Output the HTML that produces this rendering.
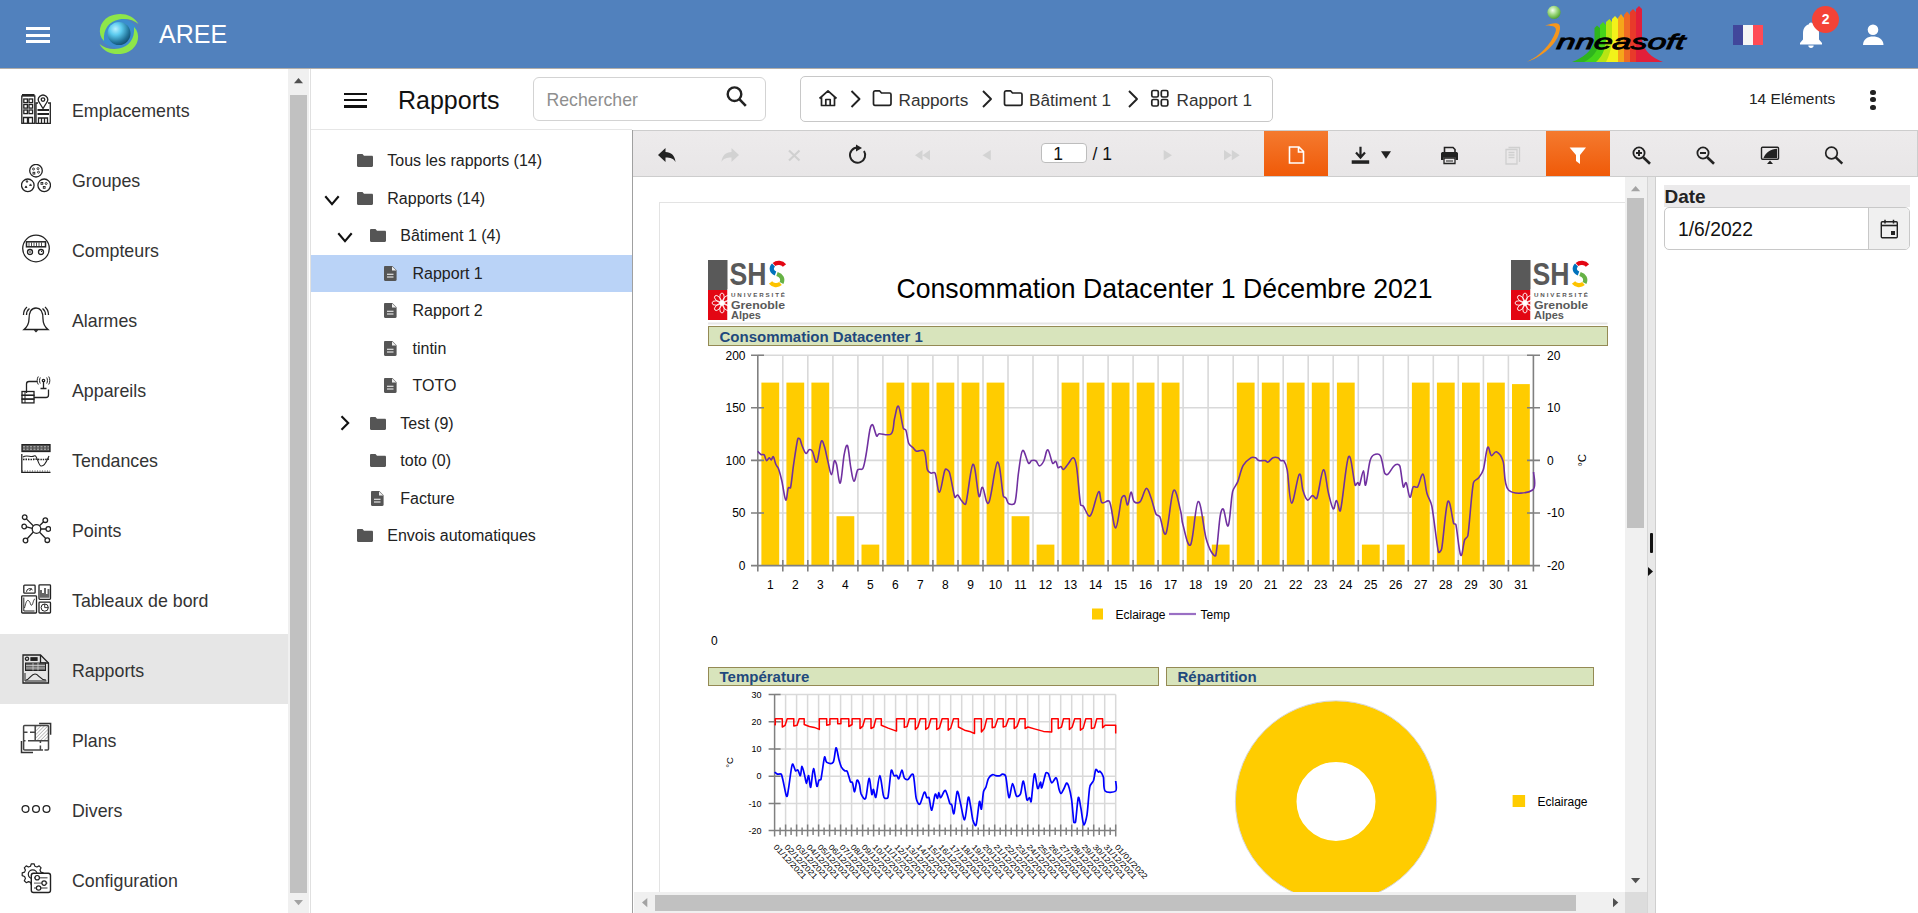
<!DOCTYPE html>
<html><head><meta charset="utf-8">
<style>
*{box-sizing:border-box;margin:0;padding:0}
html,body{width:1918px;height:913px;overflow:hidden;background:#fff;font-family:"Liberation Sans",sans-serif;color:#222}
.abs{position:absolute}
#hdr{position:absolute;left:0;top:0;width:1918px;height:68px;background:#5181bd}
#side{position:absolute;left:0;top:68px;width:288px;height:845px;background:#fff}
.si{position:absolute;left:0;width:288px;height:70px}
.si .tx{position:absolute;left:72px;top:1.5px;line-height:70px;font-size:17.8px;color:#333}
.si svg{position:absolute;left:20px;top:19px}
.si.sel{background:#e6e6e6}
#sscroll{position:absolute;left:288px;top:68px;width:21px;height:845px;background:#f0f0f0}
#mainhdr{position:absolute;left:310px;top:68px;width:1608px;height:62px;background:#fff}
#tree{position:absolute;left:310px;top:129px;width:322px;height:784px;background:#fff;border-top:1px solid #e6e6e6}
.ti{position:absolute;left:1px;width:321px;height:37px;font-size:16px;line-height:37px;color:#222}
.ti.sel{background:#bad3f7}
#viewer{position:absolute;left:632px;top:130px;width:1286px;height:783px;background:#fff;border-left:1px solid #a0a0a0}
#tb{position:absolute;left:0;top:0;width:1285px;height:47px;background:linear-gradient(#edebec,#e8e6e7);border-top:1px solid #cdcdcd;border-bottom:1px solid #cdcdcd;border-right:1px solid #cdcdcd}
</style></head>
<body>
<div id="hdr">
<div class="abs" style="left:26px;top:27px;width:24px;height:3px;background:#fff"></div>
<div class="abs" style="left:26px;top:33.5px;width:24px;height:3px;background:#fff"></div>
<div class="abs" style="left:26px;top:40px;width:24px;height:3px;background:#fff"></div>
<svg class="abs" style="left:95px;top:10px" width="48" height="48" viewBox="0 0 48 48">
<defs><radialGradient id="gl" cx="0.35" cy="0.3" r="0.75"><stop offset="0" stop-color="#b8f0ff"/><stop offset="0.35" stop-color="#5ccbef"/><stop offset="0.8" stop-color="#1f6f95"/><stop offset="1" stop-color="#14506e"/></radialGradient></defs>
<ellipse cx="24" cy="23.5" rx="19" ry="15" fill="#3a8ed0" opacity="0.9"/>
<path d="M9 31 C2 24 4 12 14 6.5 C24 1.5 38 3.5 43.5 14 C39 10 31 8 24 9.5 C14 11.5 8 19 9 31 Z" fill="#8ee64a"/>
<path d="M39 17 C46 24 44 36 34 41.5 C24 46.5 10 44.5 4.5 34 C9 38 17 40 24 38.5 C34 36.5 40 29 39 17 Z" fill="#8ee64a"/>
<circle cx="24" cy="23.5" r="11.5" fill="url(#gl)"/>
</svg>
<div class="abs" style="left:159px;top:19px;font-size:25px;line-height:30px;color:#fff">AREE</div>
<svg class="abs" style="left:1520px;top:0" width="180" height="68" viewBox="0 0 180 68">
<defs><radialGradient id="gs" cx="0.4" cy="0.35" r="0.7"><stop offset="0" stop-color="#f4fff0"/><stop offset="0.5" stop-color="#9ad67a"/><stop offset="1" stop-color="#4a9e2a"/></radialGradient></defs>
<circle cx="34" cy="12.3" r="6.6" fill="url(#gs)"/>
<path d="M7 61.8 C20 56 31 44 35.5 32 C37 27.5 35 25.5 25 25.5 C33 22.5 40.5 21.5 40 28 C39.5 40 27 55 7 61.8 Z" fill="#f5961c"/>
<g>
<path d="M75 62 L52 62 C62 58 72 52 74.5 40 L74.5 28 L77 25.5 L80 28 L80 62 Z" fill="#2eb51d"/>
<path d="M80 62 L64 62 C72 58 78 52 80 40 L80 25 L83 22 L86 25 L86 62 Z" fill="#45d41a"/>
<path d="M86 62 L76 62 C82 57 85 50 86 40 L86 22 L89.5 19 L92 22 L92 62 Z" fill="#b7e514"/>
<path d="M92 62 L86 62 C89 56 91 50 92 40 L92 19 L95 16 L98 19 L98 62 Z" fill="#f2f21a"/>
<path d="M98 62 L98 18 L101 14 L104 18 L104 62 Z" fill="#f5a51a"/>
<path d="M104 62 L104 15 L107 11.5 L110 15 L110 62 L116 62 Z" fill="#ef6a24"/>
<path d="M110 62 L110 12 L113 9 L116 12 L116 40 C117 52 122 58 130 62 Z" fill="#e83a2a"/>
<path d="M116 62 L116 9 L119 6 L122 9 L122 40 C123 50 132 58 143 62 Z" fill="#e21f3a"/>
</g>
<text x="37" y="49" font-family="Liberation Sans" font-style="italic" font-size="21" fill="#000" stroke="#000" stroke-width="0.9" textLength="128" lengthAdjust="spacingAndGlyphs" transform="skewX(-8) translate(6,0)">nneasoft</text>
</svg>
<div class="abs" style="left:1733px;top:25px;width:10px;height:20px;background:#41479b"></div>
<div class="abs" style="left:1743px;top:25px;width:10px;height:20px;background:#f5f5f5"></div>
<div class="abs" style="left:1753px;top:25px;width:10px;height:20px;background:#ff4b55"></div>
<svg class="abs" style="left:1798px;top:20px" width="26" height="30" viewBox="0 0 26 30">
<path d="M13 2.5 C14.2 2.5 15 3.3 15 4.3 C19 5.3 21 9 21 13 L21 19.5 L24 23 L24 24.5 L2 24.5 L2 23 L5 19.5 L5 13 C5 9 7 5.3 11 4.3 C11 3.3 11.8 2.5 13 2.5 Z" fill="#fff"/>
<path d="M10.3 25.5 L15.7 25.5 C15.7 27 14.5 28 13 28 C11.5 28 10.3 27 10.3 25.5 Z" fill="#fff"/>
</svg>
<div class="abs" style="left:1812px;top:6.3px;width:27.2px;height:27.2px;border-radius:50%;background:#f44336;color:#fff;font-weight:bold;font-size:14px;line-height:27px;text-align:center">2</div>
<svg class="abs" style="left:1860px;top:22px" width="26" height="26" viewBox="0 0 26 26">
<circle cx="13" cy="7.8" r="5.3" fill="#fff"/>
<path d="M3 23 C3 17 8 14.5 13 14.5 C18 14.5 23.5 17 23.5 23 Z" fill="#fff"/>
</svg>
</div>
<div id="side"><div class="si" style="top:6px"><svg width="30" height="30" viewBox="0 0 30 30" style="left:21px;top:20px"><g fill="none" stroke="#222" stroke-width="1.3"><rect x="0.8" y="2" width="13" height="27.3"/><path d="M1 1 H13.5" stroke-width="2"/>
<rect x="2.8" y="5" width="3.6" height="3.6"/><rect x="8" y="5" width="3.6" height="3.6"/>
<rect x="2.8" y="10.5" width="3.6" height="3.6"/><rect x="8" y="10.5" width="3.6" height="3.6"/>
<rect x="2.8" y="16" width="3.6" height="3.6"/><rect x="8" y="16" width="3.6" height="3.6"/>
<path d="M2.5 29 V23.5 H6.5 V29 M7.5 29 V23.5 H11.5 V29"/>
<path d="M17 9 H15 V29.3 H29.3 V9 H27"/><path d="M22 14.5 L18.3 8.5 A4.6 4.6 0 1 1 25.7 8.5 Z"/><circle cx="22" cy="5.6" r="1.8"/>
<path d="M16.5 16 H28 M16.5 20 H28" stroke-width="2.2"/><path d="M17.5 29 V24 H26.5 V29 M20.5 24 V29 M23.5 24 V29"/></g></svg><div class="tx">Emplacements</div></div>
<div class="si" style="top:76px"><svg width="30" height="30" viewBox="0 0 30 30" style="left:21px;top:20px"><g fill="none" stroke="#222" stroke-width="1.3"><circle cx="15" cy="6.7" r="6.3"/><circle cx="6.8" cy="21.3" r="6.3"/><circle cx="23.2" cy="21.3" r="6.3"/>
<g stroke-width="0.9"><circle cx="12.5" cy="5" r="1"/><circle cx="17" cy="4.6" r="1"/><circle cx="17.5" cy="8.2" r="1"/><rect x="12" y="8.3" width="1.8" height="1.8"/>
<path d="M5 18 l1 -1.6 l1 1.6z M8.5 21.5 l1 -1.6 l1 1.6z M4 23.5 l1 -1.6 l1 1.6z"/>
<rect x="20" y="18.5" width="1.8" height="1.8"/><circle cx="25.2" cy="19.5" r="1"/><rect x="22.3" y="22.5" width="1.8" height="1.8"/></g></g></svg><div class="tx">Groupes</div></div>
<div class="si" style="top:146px"><svg width="30" height="30" viewBox="0 0 30 30" style="left:21px;top:20px"><g fill="none" stroke="#222" stroke-width="1.3"><circle cx="15" cy="14.5" r="13.3"/><rect x="5.5" y="7.8" width="19" height="5" stroke-width="1.5"/>
<path d="M8 8.5 V12 M10.5 8.5 V12 M13 8.5 V12 M15.5 8.5 V12 M18 8.5 V12 M20.5 8.5 V12" stroke-width="0.8"/>
<circle cx="9" cy="18" r="2.5"/><circle cx="20" cy="18" r="2.5"/><path d="M8 18 H10 M20 18 L21 17" stroke-width="1"/></g></svg><div class="tx">Compteurs</div></div>
<div class="si" style="top:216px"><svg width="30" height="30" viewBox="0 0 30 30" style="left:21px;top:20px"><g fill="none" stroke="#222" stroke-width="1.3"><path d="M15 4 C9.5 4 8 9 8 15 C8 20 6 23 3 25.5 H27 C24 23 22 20 22 15 C22 9 20.5 4 15 4 Z"/><path d="M13.5 26 L15 27.5 L16.5 26"/>
<path d="M6 3 C3.5 5 2.5 8 2.5 11 M8.5 4.5 C6.5 6 5.5 8.5 5.5 11 M24 3 C26.5 5 27.5 8 27.5 11 M21.5 4.5 C23.5 6 24.5 8.5 24.5 11"/></g></svg><div class="tx">Alarmes</div></div>
<div class="si" style="top:286px"><svg width="30" height="30" viewBox="0 0 30 30" style="left:21px;top:20px"><g fill="none" stroke="#222" stroke-width="1.3"><path d="M5.5 19 V10 C5.5 8.5 6.5 7.5 8 7.5 H16"/><path d="M13 23.5 H25 C26.5 23.5 27.5 22.5 27.5 21 V15.5"/>
<path d="M22.5 8 V14.5 M19.5 14.5 H25.5"/><circle cx="22.5" cy="6.5" r="1.2"/>
<path d="M19.3 3.5 C18.3 5 18.3 8 19.3 9.5 M25.7 3.5 C26.7 5 26.7 8 25.7 9.5 M17.3 2.5 C15.8 4.5 15.8 8.5 17.3 10.5 M27.7 2.5 C29.2 4.5 29.2 8.5 27.7 10.5" stroke-width="1"/>
<rect x="1" y="17.5" width="12" height="3.8"/><rect x="1" y="21.3" width="12" height="3.8"/><rect x="1" y="25.1" width="12" height="3.8"/><path d="M4 17.5 V29" stroke-width="1"/></g></svg><div class="tx">Appareils</div></div>
<div class="si" style="top:356px"><svg width="30" height="30" viewBox="0 0 30 30" style="left:21px;top:20px"><g fill="none" stroke="#222" stroke-width="1.3"><rect x="1" y="0.5" width="28" height="7" fill="#555" stroke="#222"/><path d="M2 2.8 H28 M2 5.2 H28" stroke="#ddd" stroke-width="0.8" stroke-dasharray="2 1.5"/>
<path d="M0.8 10 V28.3 H29.5"/><path d="M1 27 H29" stroke-dasharray="1 1.5" stroke-width="0.8"/>
<path d="M2 13 C6 10 10 14 13 12 C16 10 17 21 20 22 C24 23 26 16 28 12" stroke-width="1.1"/><path d="M2 15.5 C6 15 10 16 14 15 C18 15.5 22 16 28 15" stroke-dasharray="1.5 1" stroke-width="1.6"/></g></svg><div class="tx">Tendances</div></div>
<div class="si" style="top:426px"><svg width="30" height="30" viewBox="0 0 30 30" style="left:21px;top:20px"><g fill="none" stroke="#222" stroke-width="1.3"><circle cx="15.5" cy="15" r="4.3"/><circle cx="3.7" cy="3.2" r="2.3"/><circle cx="3.2" cy="12.5" r="2.3"/><circle cx="4.5" cy="26.5" r="2.3"/>
<circle cx="24.3" cy="6.2" r="2.3"/><circle cx="27.3" cy="15" r="2.3"/><circle cx="26.3" cy="26.2" r="2.3"/>
<path d="M5.4 4.9 L12.5 12 M5.5 12.8 L11.2 14.3 M6.2 24.8 L12.3 18 M22.6 7.8 L18.5 11.8 M25 15 H19.8 M24.5 24.3 L18.6 18.2"/></g></svg><div class="tx">Points</div></div>
<div class="si" style="top:496px"><svg width="30" height="30" viewBox="0 0 30 30" style="left:21px;top:20px;overflow:visible"><g fill="none" stroke="#222" stroke-width="1.3">
<rect x="2.8" y="1.2" width="11.3" height="8" rx="0.8"/><path d="M5.5 7.8 A3.3 3.3 0 0 1 11.5 6 M8.5 7 L10.5 4.5" stroke-width="1"/>
<rect x="0.7" y="11.8" width="14.8" height="17.2" rx="0.8"/><path d="M2.8 13.5 V27 H13.5" stroke-width="1"/><path d="M3.5 24 C5 18 6 15 8 17 C10 19 9 22 11 21 C12 20 12.5 15 14 15" stroke-width="0.9"/>
<rect x="18" y="0.8" width="11.5" height="14.5" rx="0.8"/><path d="M20 13.8 V6 M22 13.8 V9 M24 13.8 V4 M26 13.8 V10 M27.5 13.8 V5" stroke="#666" stroke-width="2"/>
<rect x="18" y="18.2" width="11.5" height="10.8" rx="0.8"/><circle cx="23.7" cy="23.6" r="3.6" stroke-width="1"/><path d="M23.7 23.6 V20 M23.7 23.6 H27.3" stroke-width="0.9"/></g></svg><div class="tx">Tableaux de bord</div></div>
<div class="si sel" style="top:566px"><svg width="30" height="30" viewBox="0 0 30 30" style="left:21px;top:20px"><g fill="none" stroke="#222" stroke-width="1.3"><path d="M2 1 H19.5 L27.5 9 V29 H2 Z"/><path d="M19.5 1 V9 H27.5"/><circle cx="6" cy="4.8" r="1.6"/><rect x="10" y="3.8" width="6" height="2.5" fill="#222"/>
<rect x="4.5" y="9" width="20" height="7.5" fill="#666" stroke-width="1"/><path d="M5 11.5 H24 M5 14 H24 M12 9 V16.5 M17 9 V16.5" stroke="#ddd" stroke-width="0.7"/>
<path d="M4 19 V27 H25.5" stroke-width="1"/><path d="M5 26 C9 25.5 10 20 14 20 C18 20 18 25.5 25 26" stroke-width="1.1"/></g></svg><div class="tx">Rapports</div></div>
<div class="si" style="top:636px"><svg width="30" height="30" viewBox="0 0 30 30" style="left:21px;top:20px;overflow:visible"><g fill="none" stroke="#444" stroke-width="1.5">
<path d="M14.2 1.4 H27.5 V16.7 H14.2 Z" stroke="none" fill="url(#hatch)"/>
<rect x="2.6" y="1.4" width="24.9" height="24.6" rx="1"/>
<path d="M18.1 -0.6 H29.6 V10.8 M0.5 17 V28.6 H12" stroke="#333"/>
<path d="M14.2 1.4 V16.7 M2.6 16.7 H4.5 M7 16.7 H27.5 M2.6 8.3 H6.5 M9 8.3 H14.2 M19.4 16.7 V19 M19.4 21.5 V26" />
<path d="M22 26 H23.5" stroke="#fff" stroke-width="2"/>
</g>
<defs><pattern id="hatch" width="2.5" height="2.5" patternUnits="userSpaceOnUse" patternTransform="rotate(45)"><rect width="2.5" height="2.5" fill="#fff"/><path d="M0 0 V2.5" stroke="#777" stroke-width="0.9"/></pattern></defs></svg><div class="tx">Plans</div></div>
<div class="si" style="top:706px"><svg width="30" height="30" viewBox="0 0 30 30" style="left:21px;top:20px"><g fill="none" stroke="#222" stroke-width="1.3"><circle cx="4.5" cy="15" r="3.4"/><circle cx="15" cy="15" r="3.4"/><circle cx="25.5" cy="15" r="3.4"/></g></svg><div class="tx">Divers</div></div>
<div class="si" style="top:776px"><svg width="30" height="30" viewBox="0 0 30 30" style="left:21px;top:20px;overflow:visible"><g fill="none" stroke="#222" stroke-width="1.2">
<path d="M22.21 8.93 L22.21 11.67 L19.82 12.46 L18.99 14.47 L20.10 16.76 L18.16 18.70 L15.91 17.57 L13.90 18.41 L13.07 20.81 L10.33 20.81 L9.54 18.42 L7.53 17.59 L5.24 18.70 L3.30 16.76 L4.43 14.51 L3.59 12.50 L1.19 11.67 L1.19 8.93 L3.58 8.14 L4.41 6.13 L3.30 3.84 L5.24 1.90 L7.49 3.03 L9.50 2.19 L10.33 -0.21 L13.07 -0.21 L13.86 2.18 L15.87 3.01 L18.16 1.90 L20.10 3.84 L18.97 6.09 L19.81 8.10 Z" stroke-linejoin="round"/><circle cx="11.7" cy="10.3" r="4.4"/>
<rect x="10.3" y="9.3" width="19.2" height="19.2" rx="2.2" fill="#fff" stroke-width="1.4"/>
<path d="M13 13.7 H26.5 M13 19.1 H26.5 M13 24 H26.5" stroke="#777" stroke-width="1.4"/>
<circle cx="16.2" cy="13.7" r="2.2" fill="#fff"/><circle cx="23.1" cy="19.1" r="2.2" fill="#fff"/><circle cx="17.6" cy="24" r="2.2" fill="#fff"/>
</g></svg><div class="tx">Configuration</div></div></div>
<div id="sscroll">
<div class="abs" style="left:22px;top:0;width:1px;height:845px;background:#e2e2e2"></div>
<svg class="abs" style="left:6px;top:9.5px" width="9" height="6"><path d="M0 5.2 L4.5 0 L9 5.2 Z" fill="#505050"/></svg>
<div class="abs" style="left:2px;top:27px;width:17px;height:798px;background:#c1c1c1"></div>
<svg class="abs" style="left:6px;top:832px" width="9" height="6"><path d="M0 0 L4.5 5.2 L9 0 Z" fill="#a3a3a3"/></svg>
</div>
<div id="mainhdr">
<div class="abs" style="left:34px;top:24.5px;width:23px;height:2.6px;background:#111"></div>
<div class="abs" style="left:34px;top:30.8px;width:23px;height:2.6px;background:#111"></div>
<div class="abs" style="left:34px;top:37.1px;width:23px;height:2.6px;background:#111"></div>
<div class="abs" style="left:88px;top:16.5px;font-size:25px;line-height:30px;color:#111">Rapports</div>
<div class="abs" style="left:223px;top:9px;width:233px;height:44px;border:1px solid #d3d3d3;border-radius:6px"></div>
<div class="abs" style="left:236.5px;top:20.5px;font-size:17.7px;line-height:22px;color:#8f8f8f">Rechercher</div>
<svg class="abs" style="left:414px;top:16px" width="26" height="26" viewBox="0 0 26 26"><circle cx="10.5" cy="10.2" r="6.8" fill="none" stroke="#222" stroke-width="2.4"/><path d="M15.3 15.2 L21.8 21.8" stroke="#222" stroke-width="2.6"/></svg>
<div class="abs" style="left:489.5px;top:7.5px;width:473px;height:46.5px;border:1px solid #c8c8c8;border-radius:5px"></div>
<svg class="abs" style="left:0;top:0;overflow:visible" width="10" height="10">
<g fill="none" stroke="#222" stroke-width="1.7" stroke-linejoin="round">
<path d="M509.5 30.5 L518 22.8 L526.5 30.5 M511.5 28.8 V37.5 H524.5 V28.8 M515.8 37.5 V31.5 H520.2 V37.5"/>
<path d="M541.5 23 L549.5 31 L541.5 39" stroke-width="1.9"/>
<path d="M563.5 24.5 C563.5 23.3 564.3 22.8 565 22.8 H569.5 L571.5 25 H579.5 C580.5 25 581 25.8 581 26.5 V35.5 C581 36.5 580.3 37.3 579.3 37.3 H565 C564.2 37.3 563.5 36.5 563.5 35.5 Z"/>
<path d="M673 23 L681 31 L673 39" stroke-width="1.9"/>
<path d="M694.5 24.5 C694.5 23.3 695.3 22.8 696 22.8 H700.5 L702.5 25 H710.5 C711.5 25 712 25.8 712 26.5 V35.5 C712 36.5 711.3 37.3 710.3 37.3 H696 C695.2 37.3 694.5 36.5 694.5 35.5 Z"/>
<path d="M819 23 L827 31 L819 39" stroke-width="1.9"/>
<rect x="841.8" y="22.5" width="6.5" height="6.5" rx="1.5"/><rect x="851.3" y="22.5" width="6.5" height="6.5" rx="1.5"/>
<rect x="841.8" y="31.5" width="6.5" height="6.5" rx="1.5"/><rect x="851.3" y="31.5" width="6.5" height="6.5" rx="1.5"/>
</g></svg>
<div class="abs" style="left:588.5px;top:21px;font-size:17.2px;line-height:22px;color:#333">Rapports</div>
<div class="abs" style="left:719px;top:21px;font-size:17.2px;line-height:22px;color:#333">Bâtiment 1</div>
<div class="abs" style="left:866.5px;top:21px;font-size:17.2px;line-height:22px;color:#333">Rapport 1</div>
<div class="abs" style="left:1439px;top:20px;font-size:15.5px;line-height:22px;color:#222">14 Eléments</div>
<div class="abs" style="left:1560.4px;top:21.9px;width:5.2px;height:5.2px;border-radius:50%;background:#222"></div>
<div class="abs" style="left:1560.4px;top:29.2px;width:5.2px;height:5.2px;border-radius:50%;background:#222"></div>
<div class="abs" style="left:1560.4px;top:36.7px;width:5.2px;height:5.2px;border-radius:50%;background:#222"></div>
</div>
<div id="tree">
<div class="abs" style="left:1px;top:124.5px;width:321px;height:37.5px;background:#bad3f7"></div>
<svg class="abs" style="left:46.89999999999998px;top:23.69999999999999px" width="16" height="13" viewBox="0 0 16 13"><path d="M0 1.2 C0 0.5 0.5 0 1.2 0 H5.5 L7 1.8 H14.8 C15.5 1.8 16 2.3 16 3 V11.8 C16 12.5 15.5 13 14.8 13 H1.2 C0.5 13 0 12.5 0 11.8 Z" fill="#555"/></svg>
<div class="abs" style="left:77.30000000000001px;top:20.8px;font-size:16px;line-height:20px;color:#222;white-space:nowrap">Tous les rapports (14)</div>
<svg class="abs" style="left:13.5px;top:64.5px" width="16" height="11" viewBox="0 0 16 11"><path d="M1.3 1.3 L8 9.2 L14.7 1.3" fill="none" stroke="#111" stroke-width="2.1"/></svg>
<svg class="abs" style="left:46.89999999999998px;top:61.69999999999999px" width="16" height="13" viewBox="0 0 16 13"><path d="M0 1.2 C0 0.5 0.5 0 1.2 0 H5.5 L7 1.8 H14.8 C15.5 1.8 16 2.3 16 3 V11.8 C16 12.5 15.5 13 14.8 13 H1.2 C0.5 13 0 12.5 0 11.8 Z" fill="#555"/></svg>
<div class="abs" style="left:77.30000000000001px;top:58.8px;font-size:16px;line-height:20px;color:#222;white-space:nowrap">Rapports (14)</div>
<svg class="abs" style="left:26.5px;top:102.0px" width="16" height="11" viewBox="0 0 16 11"><path d="M1.3 1.3 L8 9.2 L14.7 1.3" fill="none" stroke="#111" stroke-width="2.1"/></svg>
<svg class="abs" style="left:59.5px;top:99.19999999999999px" width="16" height="13" viewBox="0 0 16 13"><path d="M0 1.2 C0 0.5 0.5 0 1.2 0 H5.5 L7 1.8 H14.8 C15.5 1.8 16 2.3 16 3 V11.8 C16 12.5 15.5 13 14.8 13 H1.2 C0.5 13 0 12.5 0 11.8 Z" fill="#555"/></svg>
<div class="abs" style="left:90.30000000000001px;top:96.3px;font-size:16px;line-height:20px;color:#222;white-space:nowrap">Bâtiment 1 (4)</div>
<svg class="abs" style="left:73.69999999999999px;top:135.5px" width="13" height="15" viewBox="0 0 13 15"><path d="M1.2 0 H8.3 L12.6 4.3 V13.8 C12.6 14.5 12.1 15 11.4 15 H1.2 C0.5 15 0 14.5 0 13.8 V1.2 C0 0.5 0.5 0 1.2 0 Z" fill="#555"/><path d="M8 0.5 V4.6 H12.3" fill="#fff" opacity="0.9"/><path d="M3 8.3 H9.5 M3 11 H9.5" stroke="#fff" stroke-width="1.1"/></svg>
<div class="abs" style="left:102.5px;top:133.8px;font-size:16px;line-height:20px;color:#222;white-space:nowrap">Rapport 1</div>
<svg class="abs" style="left:73.69999999999999px;top:173.0px" width="13" height="15" viewBox="0 0 13 15"><path d="M1.2 0 H8.3 L12.6 4.3 V13.8 C12.6 14.5 12.1 15 11.4 15 H1.2 C0.5 15 0 14.5 0 13.8 V1.2 C0 0.5 0.5 0 1.2 0 Z" fill="#555"/><path d="M8 0.5 V4.6 H12.3" fill="#fff" opacity="0.9"/><path d="M3 8.3 H9.5 M3 11 H9.5" stroke="#fff" stroke-width="1.1"/></svg>
<div class="abs" style="left:102.5px;top:171.3px;font-size:16px;line-height:20px;color:#222;white-space:nowrap">Rapport 2</div>
<svg class="abs" style="left:73.69999999999999px;top:210.5px" width="13" height="15" viewBox="0 0 13 15"><path d="M1.2 0 H8.3 L12.6 4.3 V13.8 C12.6 14.5 12.1 15 11.4 15 H1.2 C0.5 15 0 14.5 0 13.8 V1.2 C0 0.5 0.5 0 1.2 0 Z" fill="#555"/><path d="M8 0.5 V4.6 H12.3" fill="#fff" opacity="0.9"/><path d="M3 8.3 H9.5 M3 11 H9.5" stroke="#fff" stroke-width="1.1"/></svg>
<div class="abs" style="left:102.5px;top:208.8px;font-size:16px;line-height:20px;color:#222;white-space:nowrap">tintin</div>
<svg class="abs" style="left:73.69999999999999px;top:248.0px" width="13" height="15" viewBox="0 0 13 15"><path d="M1.2 0 H8.3 L12.6 4.3 V13.8 C12.6 14.5 12.1 15 11.4 15 H1.2 C0.5 15 0 14.5 0 13.8 V1.2 C0 0.5 0.5 0 1.2 0 Z" fill="#555"/><path d="M8 0.5 V4.6 H12.3" fill="#fff" opacity="0.9"/><path d="M3 8.3 H9.5 M3 11 H9.5" stroke="#fff" stroke-width="1.1"/></svg>
<div class="abs" style="left:102.5px;top:246.3px;font-size:16px;line-height:20px;color:#222;white-space:nowrap">TOTO</div>
<svg class="abs" style="left:29.5px;top:285px" width="10" height="16" viewBox="0 0 10 16"><path d="M1.5 1.2 L8.2 8 L1.5 14.8" fill="none" stroke="#111" stroke-width="2.1"/></svg>
<svg class="abs" style="left:59.5px;top:286.7px" width="16" height="13" viewBox="0 0 16 13"><path d="M0 1.2 C0 0.5 0.5 0 1.2 0 H5.5 L7 1.8 H14.8 C15.5 1.8 16 2.3 16 3 V11.8 C16 12.5 15.5 13 14.8 13 H1.2 C0.5 13 0 12.5 0 11.8 Z" fill="#555"/></svg>
<div class="abs" style="left:90.30000000000001px;top:283.8px;font-size:16px;line-height:20px;color:#222;white-space:nowrap">Test (9)</div>
<svg class="abs" style="left:59.5px;top:324.2px" width="16" height="13" viewBox="0 0 16 13"><path d="M0 1.2 C0 0.5 0.5 0 1.2 0 H5.5 L7 1.8 H14.8 C15.5 1.8 16 2.3 16 3 V11.8 C16 12.5 15.5 13 14.8 13 H1.2 C0.5 13 0 12.5 0 11.8 Z" fill="#555"/></svg>
<div class="abs" style="left:90.30000000000001px;top:321.3px;font-size:16px;line-height:20px;color:#222;white-space:nowrap">toto (0)</div>
<svg class="abs" style="left:61.30000000000001px;top:360.5px" width="13" height="15" viewBox="0 0 13 15"><path d="M1.2 0 H8.3 L12.6 4.3 V13.8 C12.6 14.5 12.1 15 11.4 15 H1.2 C0.5 15 0 14.5 0 13.8 V1.2 C0 0.5 0.5 0 1.2 0 Z" fill="#555"/><path d="M8 0.5 V4.6 H12.3" fill="#fff" opacity="0.9"/><path d="M3 8.3 H9.5 M3 11 H9.5" stroke="#fff" stroke-width="1.1"/></svg>
<div class="abs" style="left:90.30000000000001px;top:358.8px;font-size:16px;line-height:20px;color:#222;white-space:nowrap">Facture</div>
<svg class="abs" style="left:46.89999999999998px;top:399.20000000000005px" width="16" height="13" viewBox="0 0 16 13"><path d="M0 1.2 C0 0.5 0.5 0 1.2 0 H5.5 L7 1.8 H14.8 C15.5 1.8 16 2.3 16 3 V11.8 C16 12.5 15.5 13 14.8 13 H1.2 C0.5 13 0 12.5 0 11.8 Z" fill="#555"/></svg>
<div class="abs" style="left:77.30000000000001px;top:396.3px;font-size:16px;line-height:20px;color:#222;white-space:nowrap">Envois automatiques</div>
</div>
<div id="viewer">
<div class="abs" style="left:0;top:47px;width:992px;height:715px;overflow:hidden">
<svg class="abs" style="left:-633px;top:-177px" width="1918" height="913" viewBox="0 0 1918 913"><rect x="659.5" y="202.5" width="1100" height="1200" fill="#fff" stroke="#e3e3e3" stroke-width="1"/>
<g transform="translate(708,260)"><rect x="0" y="0" width="19.5" height="30" fill="#595959"/><rect x="0" y="30" width="19.5" height="30" fill="#e30613"/><g transform="translate(14,43)" fill="none" stroke="#fff" stroke-width="0.9"><ellipse cx="0" cy="-6" rx="2.2" ry="4" transform="rotate(0)"/><ellipse cx="0" cy="-6" rx="2.2" ry="4" transform="rotate(45)"/><ellipse cx="0" cy="-6" rx="2.2" ry="4" transform="rotate(90)"/><ellipse cx="0" cy="-6" rx="2.2" ry="4" transform="rotate(135)"/><ellipse cx="0" cy="-6" rx="2.2" ry="4" transform="rotate(180)"/><ellipse cx="0" cy="-6" rx="2.2" ry="4" transform="rotate(225)"/><ellipse cx="0" cy="-6" rx="2.2" ry="4" transform="rotate(270)"/><ellipse cx="0" cy="-6" rx="2.2" ry="4" transform="rotate(315)"/><circle cx="0" cy="0" r="2.2" fill="#fff"/></g><rect x="19.5" y="29" width="3" height="31" fill="#fff"/><text x="21.5" y="25.3" font-family="Liberation Sans" font-weight="bold" font-size="31.5" fill="#595959" textLength="37" lengthAdjust="spacingAndGlyphs">SH</text><g fill="none" stroke-width="4.2"><path d="M76.5 5.5 C74 2.5 69 2 66 4.5" stroke="#e30613"/><path d="M65.5 5 C62.5 8 63.5 12 67.5 13.5" stroke="#0072bc"/><path d="M69 14 C73.5 15.5 75.5 19 73.5 23" stroke="#66b245"/><path d="M72.5 23.5 C69.5 26 65 25.5 62.5 22.5" stroke="#fdc300"/></g><text x="23" y="37.2" font-family="Liberation Sans" font-weight="bold" font-size="6.2" fill="#595959" textLength="54" lengthAdjust="spacing">UNIVERSITÉ</text><text x="23" y="48.5" font-family="Liberation Sans" font-weight="bold" font-size="11.8" fill="#595959" textLength="54" lengthAdjust="spacingAndGlyphs">Grenoble</text><text x="23" y="59.2" font-family="Liberation Sans" font-weight="bold" font-size="11.8" fill="#595959" textLength="30" lengthAdjust="spacingAndGlyphs">Alpes</text></g>
<g transform="translate(1511,260)"><rect x="0" y="0" width="19.5" height="30" fill="#595959"/><rect x="0" y="30" width="19.5" height="30" fill="#e30613"/><g transform="translate(14,43)" fill="none" stroke="#fff" stroke-width="0.9"><ellipse cx="0" cy="-6" rx="2.2" ry="4" transform="rotate(0)"/><ellipse cx="0" cy="-6" rx="2.2" ry="4" transform="rotate(45)"/><ellipse cx="0" cy="-6" rx="2.2" ry="4" transform="rotate(90)"/><ellipse cx="0" cy="-6" rx="2.2" ry="4" transform="rotate(135)"/><ellipse cx="0" cy="-6" rx="2.2" ry="4" transform="rotate(180)"/><ellipse cx="0" cy="-6" rx="2.2" ry="4" transform="rotate(225)"/><ellipse cx="0" cy="-6" rx="2.2" ry="4" transform="rotate(270)"/><ellipse cx="0" cy="-6" rx="2.2" ry="4" transform="rotate(315)"/><circle cx="0" cy="0" r="2.2" fill="#fff"/></g><rect x="19.5" y="29" width="3" height="31" fill="#fff"/><text x="21.5" y="25.3" font-family="Liberation Sans" font-weight="bold" font-size="31.5" fill="#595959" textLength="37" lengthAdjust="spacingAndGlyphs">SH</text><g fill="none" stroke-width="4.2"><path d="M76.5 5.5 C74 2.5 69 2 66 4.5" stroke="#e30613"/><path d="M65.5 5 C62.5 8 63.5 12 67.5 13.5" stroke="#0072bc"/><path d="M69 14 C73.5 15.5 75.5 19 73.5 23" stroke="#66b245"/><path d="M72.5 23.5 C69.5 26 65 25.5 62.5 22.5" stroke="#fdc300"/></g><text x="23" y="37.2" font-family="Liberation Sans" font-weight="bold" font-size="6.2" fill="#595959" textLength="54" lengthAdjust="spacing">UNIVERSITÉ</text><text x="23" y="48.5" font-family="Liberation Sans" font-weight="bold" font-size="11.8" fill="#595959" textLength="54" lengthAdjust="spacingAndGlyphs">Grenoble</text><text x="23" y="59.2" font-family="Liberation Sans" font-weight="bold" font-size="11.8" fill="#595959" textLength="30" lengthAdjust="spacingAndGlyphs">Alpes</text></g>
<text x="896.5" y="298" font-family="Liberation Sans" font-size="27.4" fill="#000" textLength="536" lengthAdjust="spacingAndGlyphs">Consommation Datacenter 1 Décembre 2021</text>
<rect x="708" y="322.5" width="899.5" height="2" fill="#e6e6e6"/>
<rect x="708.5" y="326.5" width="899" height="19" fill="#d8e4bc" stroke="#948a54" stroke-width="1"/><text x="719.5" y="341.7" font-family="Liberation Sans" font-weight="bold" font-size="15" fill="#1f497d">Consommation Datacenter 1</text>
<path d="M782.8 355.2 V565.6 M807.8 355.2 V565.6 M832.9 355.2 V565.6 M857.9 355.2 V565.6 M882.9 355.2 V565.6 M907.9 355.2 V565.6 M932.9 355.2 V565.6 M958 355.2 V565.6 M983 355.2 V565.6 M1008 355.2 V565.6 M1033 355.2 V565.6 M1058 355.2 V565.6 M1083.1 355.2 V565.6 M1108.1 355.2 V565.6 M1133.1 355.2 V565.6 M1158.1 355.2 V565.6 M1183.1 355.2 V565.6 M1208.1 355.2 V565.6 M1233.2 355.2 V565.6 M1258.2 355.2 V565.6 M1283.2 355.2 V565.6 M1308.2 355.2 V565.6 M1333.2 355.2 V565.6 M1358.3 355.2 V565.6 M1383.3 355.2 V565.6 M1408.3 355.2 V565.6 M1433.3 355.2 V565.6 M1458.3 355.2 V565.6 M1483.4 355.2 V565.6 M1508.4 355.2 V565.6 M757.8 513 H1533.4 M757.8 460.4 H1533.4 M757.8 407.8 H1533.4 M757.8 355.2 H1533.4" stroke="#d9d9d9" stroke-width="1.6" fill="none"/>
<g fill="#ffcc00"><rect x="761.4" y="382.6" width="17.8" height="183"/><rect x="786.4" y="382.6" width="17.8" height="183"/><rect x="811.4" y="382.6" width="17.8" height="183"/><rect x="836.5" y="516.2" width="17.8" height="49.4"/><rect x="861.5" y="544.6" width="17.8" height="21"/><rect x="886.5" y="382.6" width="17.8" height="183"/><rect x="911.5" y="382.6" width="17.8" height="183"/><rect x="936.5" y="382.6" width="17.8" height="183"/><rect x="961.6" y="382.6" width="17.8" height="183"/><rect x="986.6" y="382.6" width="17.8" height="183"/><rect x="1011.6" y="516.2" width="17.8" height="49.4"/><rect x="1036.6" y="544.6" width="17.8" height="21"/><rect x="1061.6" y="382.6" width="17.8" height="183"/><rect x="1086.7" y="382.6" width="17.8" height="183"/><rect x="1111.7" y="382.6" width="17.8" height="183"/><rect x="1136.7" y="382.6" width="17.8" height="183"/><rect x="1161.7" y="382.6" width="17.8" height="183"/><rect x="1186.7" y="516.2" width="17.8" height="49.4"/><rect x="1211.8" y="544.6" width="17.8" height="21"/><rect x="1236.8" y="382.6" width="17.8" height="183"/><rect x="1261.8" y="382.6" width="17.8" height="183"/><rect x="1286.8" y="382.6" width="17.8" height="183"/><rect x="1311.8" y="382.6" width="17.8" height="183"/><rect x="1336.9" y="382.6" width="17.8" height="183"/><rect x="1361.9" y="544.6" width="17.8" height="21"/><rect x="1386.9" y="544.6" width="17.8" height="21"/><rect x="1411.9" y="382.6" width="17.8" height="183"/><rect x="1436.9" y="382.6" width="17.8" height="183"/><rect x="1462" y="382.6" width="17.8" height="183"/><rect x="1487" y="382.6" width="17.8" height="183"/><rect x="1512" y="384.1" width="17.8" height="181.5"/></g>
<path d="M757.8 355.2 V565.6 H1533.4 V355.2 M751 565.6 H764 M1527 565.6 H1540 M751 513 H764 M1527 513 H1540 M751 460.4 H764 M1527 460.4 H1540 M751 407.8 H764 M1527 407.8 H1540 M751 355.2 H764 M1527 355.2 H1540 M757.8 560 V571.5 M782.8 560 V571.5 M807.8 560 V571.5 M832.9 560 V571.5 M857.9 560 V571.5 M882.9 560 V571.5 M907.9 560 V571.5 M932.9 560 V571.5 M958 560 V571.5 M983 560 V571.5 M1008 560 V571.5 M1033 560 V571.5 M1058 560 V571.5 M1083.1 560 V571.5 M1108.1 560 V571.5 M1133.1 560 V571.5 M1158.1 560 V571.5 M1183.1 560 V571.5 M1208.1 560 V571.5 M1233.2 560 V571.5 M1258.2 560 V571.5 M1283.2 560 V571.5 M1308.2 560 V571.5 M1333.2 560 V571.5 M1358.3 560 V571.5 M1383.3 560 V571.5 M1408.3 560 V571.5 M1433.3 560 V571.5 M1458.3 560 V571.5 M1483.4 560 V571.5 M1508.4 560 V571.5 M1533.4 560 V571.5" stroke="#808080" stroke-width="1.6" fill="none"/>
<path d="M757.7 451.2 C758.3 451.8 759.8 453.8 761 454.5 C762.1 455.1 763.3 453.9 764.2 454.9 C765.2 456 765.5 460.1 766.4 460.6 C767.3 461.1 768.4 457.9 769.3 457.8 C770.2 457.7 770.5 460.2 771.2 460 C771.9 459.8 772.6 455.9 773.4 456.7 C774.2 457.5 774.9 462.1 775.8 464.3 C776.6 466.2 777.8 466.8 778.5 468.7 C779.6 471.7 780.7 475.9 781.8 480.8 C783.1 486.4 784.5 498.7 785.7 500 C786.9 501.3 787.4 490 788.3 487.8 C788.6 487 790.3 488.7 790.5 487.8 C791.5 483.4 792.5 472 793.8 463.2 C795.1 454.4 796.7 443 797.8 438.7 C798 437.8 799.5 438.3 800 439.1 C800.8 440.4 801 443.1 802.1 445.7 C803.2 448.3 804.6 452.7 805.9 453.4 C807.2 454.1 807.9 450.1 809.1 449.7 C810.3 449.3 811.6 450 812.4 451.2 C813.8 453.4 815.2 463.9 816.8 462.1 C818.4 460.3 819.8 444.1 821.2 441.3 C822.4 439 823.7 444.4 824.5 446.8 C825.7 450.3 826.5 456 827.8 461 C829.1 466 830.3 474.6 831.5 474.6 C832.7 474.6 833.4 462.9 834.3 461 C835 459.6 836.1 462.8 836.5 464.3 C837.6 468.3 838.9 484.8 840.3 483 C841.7 481.2 842.9 461.2 844.2 454.5 C844.9 450.8 846.3 443.3 847.5 445.7 C848.7 448.1 849.6 461.2 850.8 467.6 C851.8 473.1 852.7 480.8 854 481.2 C855.3 481.6 856.2 472.1 857.8 469.8 C859 468.1 861.8 470.5 862.8 468.7 C864.3 465.9 865.1 460.2 866.1 454.5 C867.4 447.4 868.8 434.6 870 429.3 C870.4 427.3 871.5 423.7 872.7 424.9 C873.9 426.1 875.4 434.3 876.6 435.9 C877.4 437 877.9 433.9 879.2 433.7 C881.8 433.3 888.5 436.5 891.3 433.7 C894.1 430.9 893.3 423.2 894.6 418.3 C895.9 413.4 896.9 404.5 898.5 406.3 C900.1 408.1 901.9 423.9 903.3 428.2 C903.7 429.5 905.5 429.1 906 430.4 C907 433.2 907.5 440.4 908.8 443.5 C909.7 445.8 911.8 446.5 913.2 447.9 C914.5 449.2 914.7 450.7 916.5 451.2 C918.5 451.8 922.6 448.5 924.2 451.2 C926.2 454.5 926.2 465.9 927.4 469.8 C927.9 471.6 929.3 472.5 930.7 473.1 C932.1 473.7 934.4 471.5 935.1 473.1 C936.7 476.5 937.7 492.8 939.5 492.2 C941.3 491.6 943.2 473.4 945 469.8 C945.8 468.1 948.6 470.2 949.3 472 C951.1 476.9 953.3 493.1 954.8 497.2 C955.3 498.6 956.5 494.4 957.7 495 C958.9 495.6 959.9 498.9 961.4 500.5 C962.9 502.1 965.1 505.9 965.8 503.8 C967.9 497.3 970.6 465.7 973 464.3 C975.4 462.9 977.2 492 978.9 496.1 C980.4 499.6 980.8 486.1 982.6 487.3 C984.4 488.5 986.1 507.2 988.8 502.7 C991.5 498.2 994.9 463.3 997.5 462.1 C1000.1 460.9 1001.8 489.6 1003.3 496.1 C1003.6 497.5 1005.3 497.1 1006.1 498.3 C1007.1 499.7 1007.2 503 1008.8 503.8 C1010.4 504.6 1014.2 505.1 1014.9 502.7 C1016.7 497 1017.2 481.4 1018.6 472 C1019.9 463.3 1020.8 452.1 1022.6 450.5 C1024.4 448.9 1026.8 461.4 1028.5 463.2 C1029.6 464.4 1030.4 461 1031.8 460.6 C1033.2 460.2 1034.7 460 1036.1 461 C1037.5 462 1038 465.9 1039.4 465.9 C1040.8 465.9 1042.6 463.3 1043.8 461 C1045.3 458.1 1046.2 449.3 1047.8 449.7 C1049.4 450.1 1051.1 461.1 1052.6 463.2 C1053.4 464.4 1054.9 460.7 1055.9 461.5 C1056.9 462.3 1057.1 466.7 1058 467.6 C1058.9 468.5 1059.9 466.2 1060.9 466.5 C1061.9 466.8 1062.2 469.8 1063.5 469.4 C1064.8 469 1066.2 466.3 1067.9 464.3 C1069.7 462.2 1071.8 457.2 1073.4 457.8 C1075 458.4 1076.1 463.5 1076.7 467.6 C1078 476.1 1079.4 498 1080.6 504.9 C1080.8 506 1082.5 505.1 1083.2 506 C1084.7 508 1087.1 514.6 1088.7 515.8 C1090.2 516.9 1091.3 514.2 1092 512.5 C1093.8 508.2 1096.8 493.5 1098.6 491.7 C1100.4 489.9 1099.9 500.9 1101.9 502.7 C1103.9 504.5 1108 498.9 1109.5 501.6 C1112 506.1 1113.5 528.5 1115.7 527.9 C1117.9 527.3 1119.9 504 1121.6 498.3 C1122 496.8 1123.8 494.9 1124.9 496.1 C1126 497.3 1126.6 505.6 1127.7 504.9 C1128.8 504.2 1129.8 492.8 1131 492.2 C1132.2 491.6 1132.4 499.9 1134.1 501.6 C1135.8 503.3 1138.5 503.4 1140.2 501.6 C1142.4 499.2 1144.3 489 1146.3 488.4 C1148.3 487.8 1149.6 494.2 1151.2 498.3 C1152.9 502.9 1154.4 510.8 1156 514.1 C1156.8 515.8 1159 515.2 1159.9 516.9 C1161.7 520.4 1163.6 538 1166 533.3 C1168.4 528.6 1170.9 494.5 1173.5 490.6 C1176.1 486.7 1179 505.3 1180.7 511.4 C1182.1 516.6 1181.4 519.5 1182.9 524.6 C1184.7 530.6 1187.8 548.8 1190.6 544.7 C1193.4 540.6 1195.4 502.9 1198.2 501.6 C1201 500.3 1203.5 528.6 1205.9 537.7 C1207.5 543.6 1209.6 548.9 1211.4 552 C1212.5 553.9 1215.3 557.3 1215.8 555.2 C1217.4 548.7 1218.8 524.1 1220.2 515.8 C1220.7 512.9 1221.9 507.4 1223.4 509.2 C1224.9 511 1226.6 528.9 1228.3 525.7 C1230 522.6 1230.9 499.6 1232.6 491.7 C1233.5 487.4 1236 486 1237.7 481.9 C1239.6 477.2 1240.8 469.7 1243.2 465.4 C1245.3 461.6 1248.6 459.2 1250.8 457.8 C1252.4 456.8 1254.1 457.3 1255.5 457.8 C1256.9 458.3 1257.1 460.1 1258.8 460.6 C1260.6 461.1 1263.6 460.3 1265.3 460.6 C1266.5 460.8 1266.8 462.5 1268 462.1 C1269.4 461.6 1271.2 458.6 1273 457.8 C1274.8 457 1276.6 457.3 1278 457.8 C1279.4 458.3 1279.6 460 1280.7 460.6 C1281.8 461.2 1283.2 459.9 1284 461 C1285.2 462.7 1286.5 466.1 1287.2 469.8 C1288.6 477.4 1289.4 502.3 1291.6 503.1 C1293.8 503.9 1297.2 476.4 1299.3 474.2 C1301.4 471.9 1301.5 486 1303 490.6 C1304.2 494.6 1305.7 499.1 1307.4 500 C1309.1 500.9 1310.7 495.9 1312.4 495.6 C1314.1 495.3 1316 500.2 1316.8 498.3 C1318.8 493.7 1321.3 470.8 1323.4 469.8 C1325.5 468.8 1326.6 485.8 1328.4 492.8 C1330 499.3 1331.7 507.4 1333.2 508.8 C1334.7 510.2 1335.2 500.2 1336.5 500.5 C1337.8 500.8 1339.4 514.4 1340.5 510.3 C1342.7 502.4 1346 461.2 1348.6 456.7 C1351.2 452.2 1353.4 480.5 1355.1 485.1 C1355.6 486.5 1357 482.5 1357.8 482.5 C1358.6 482.5 1359 486.2 1359.5 485.1 C1360.5 483 1362.4 470.9 1363.5 470.9 C1364.6 470.9 1364.4 486.9 1365.6 485.1 C1366.8 483.3 1368.5 466.4 1370 461 C1370.8 458.2 1371.9 455.9 1373.8 454.9 C1375.7 453.9 1379 453.4 1380.3 455.6 C1382.3 458.9 1383.3 469.8 1384.7 473.1 C1385.2 474.4 1386.9 475 1388 474.2 C1389.6 473 1391.8 468.3 1393.5 466.5 C1394.7 465.2 1396 464.3 1397.2 464.3 C1398.4 464.3 1399.6 465.1 1400 466.5 C1401.1 470.6 1402.2 483.9 1403.3 486.9 C1404 488.7 1405.1 481.2 1406.2 482.9 C1407.4 484.8 1408.6 496.5 1409.9 497.2 C1411.2 497.9 1411.8 488.8 1413.2 486.9 C1414.3 485.5 1416.5 488.3 1417.6 486.9 C1419.4 484.6 1421.3 473 1423 474.2 C1424.7 475.4 1425.4 487.8 1427 493.5 C1428.4 498.6 1430.8 500.7 1431.8 505.9 C1433.9 516.4 1436.6 544.2 1438.4 551.9 C1438.8 553.7 1441.4 550.5 1441.7 548.7 C1443.4 539.6 1445.6 506.1 1447.8 501.6 C1450 497.1 1452.2 519.4 1453.7 523.5 C1454 524.4 1455.7 523.6 1455.9 524.6 C1457.2 530.3 1459.1 552.4 1460.7 555.2 C1462.3 558 1463.3 543.4 1464.6 539.9 C1465.4 537.8 1467.6 537.7 1467.9 535.5 C1469.5 525.2 1471.4 493.3 1473.4 482.9 C1474 479.9 1477.1 479.9 1478.9 477.5 C1480.7 475.1 1482.3 473.2 1483.3 469.8 C1484.9 464.4 1486.1 450.1 1487.6 447.5 C1489.1 444.9 1489.8 454.8 1491.4 455.6 C1493 456.4 1494.3 450.8 1496.4 451.8 C1498.5 452.8 1501.6 456.7 1503 461 C1505.2 467.9 1503.2 484.8 1508.5 490 C1513.8 495.2 1528.1 493.2 1532.6 490 C1537.1 486.8 1533.4 475.2 1533.6 472" stroke="#7030a0" stroke-width="1.6" fill="none" stroke-linejoin="round"/>
<g font-family="Liberation Sans" font-size="12" fill="#000"><text x="745.5" y="569.9" text-anchor="end">0</text><text x="745.5" y="517.3" text-anchor="end">50</text><text x="745.5" y="464.7" text-anchor="end">100</text><text x="745.5" y="412.1" text-anchor="end">150</text><text x="745.5" y="359.5" text-anchor="end">200</text><text x="1547" y="359.5">20</text><text x="1547" y="412.1">10</text><text x="1547" y="464.7">0</text><text x="1547" y="517.3">-10</text><text x="1547" y="569.9">-20</text><text x="770.3" y="589.3" text-anchor="middle">1</text><text x="795.3" y="589.3" text-anchor="middle">2</text><text x="820.3" y="589.3" text-anchor="middle">3</text><text x="845.4" y="589.3" text-anchor="middle">4</text><text x="870.4" y="589.3" text-anchor="middle">5</text><text x="895.4" y="589.3" text-anchor="middle">6</text><text x="920.4" y="589.3" text-anchor="middle">7</text><text x="945.4" y="589.3" text-anchor="middle">8</text><text x="970.5" y="589.3" text-anchor="middle">9</text><text x="995.5" y="589.3" text-anchor="middle">10</text><text x="1020.5" y="589.3" text-anchor="middle">11</text><text x="1045.5" y="589.3" text-anchor="middle">12</text><text x="1070.5" y="589.3" text-anchor="middle">13</text><text x="1095.6" y="589.3" text-anchor="middle">14</text><text x="1120.6" y="589.3" text-anchor="middle">15</text><text x="1145.6" y="589.3" text-anchor="middle">16</text><text x="1170.6" y="589.3" text-anchor="middle">17</text><text x="1195.6" y="589.3" text-anchor="middle">18</text><text x="1220.7" y="589.3" text-anchor="middle">19</text><text x="1245.7" y="589.3" text-anchor="middle">20</text><text x="1270.7" y="589.3" text-anchor="middle">21</text><text x="1295.7" y="589.3" text-anchor="middle">22</text><text x="1320.7" y="589.3" text-anchor="middle">23</text><text x="1345.8" y="589.3" text-anchor="middle">24</text><text x="1370.8" y="589.3" text-anchor="middle">25</text><text x="1395.8" y="589.3" text-anchor="middle">26</text><text x="1420.8" y="589.3" text-anchor="middle">27</text><text x="1445.8" y="589.3" text-anchor="middle">28</text><text x="1470.9" y="589.3" text-anchor="middle">29</text><text x="1495.9" y="589.3" text-anchor="middle">30</text><text x="1520.9" y="589.3" text-anchor="middle">31</text><text transform="translate(1585.5,460.3) rotate(-90)" text-anchor="middle" font-size="11.5">°C</text><rect x="1092" y="608.5" width="11" height="11" fill="#ffcc00"/><text x="1115.5" y="618.6">Eclairage</text><path d="M1169 614 H1196" stroke="#9a6fc4" stroke-width="2.2"/><text x="1200.5" y="618.6">Temp</text><text x="711" y="644.5">0</text></g>
<rect x="708.5" y="667.5" width="450" height="18" fill="#d8e4bc" stroke="#948a54" stroke-width="1"/><text x="719.5" y="681.7" font-family="Liberation Sans" font-weight="bold" font-size="15" fill="#1f497d">Température</text>
<rect x="1166.5" y="667.5" width="427" height="18" fill="#d8e4bc" stroke="#948a54" stroke-width="1"/><text x="1177.5" y="681.7" font-family="Liberation Sans" font-weight="bold" font-size="15" fill="#1f497d">Répartition</text>
<path d="M785.6 694.6 V830.6 M796.6 694.6 V830.6 M807.6 694.6 V830.6 M818.6 694.6 V830.6 M829.6 694.6 V830.6 M840.6 694.6 V830.6 M851.6 694.6 V830.6 M862.6 694.6 V830.6 M873.6 694.6 V830.6 M884.6 694.6 V830.6 M895.6 694.6 V830.6 M906.6 694.6 V830.6 M917.6 694.6 V830.6 M928.6 694.6 V830.6 M939.6 694.6 V830.6 M950.7 694.6 V830.6 M961.7 694.6 V830.6 M972.7 694.6 V830.6 M983.7 694.6 V830.6 M994.7 694.6 V830.6 M1005.7 694.6 V830.6 M1016.7 694.6 V830.6 M1027.7 694.6 V830.6 M1038.7 694.6 V830.6 M1049.7 694.6 V830.6 M1060.7 694.6 V830.6 M1071.7 694.6 V830.6 M1082.7 694.6 V830.6 M1093.7 694.6 V830.6 M1104.7 694.6 V830.6 M1115.7 694.6 V830.6 M774.6 803.4 H1115.7 M774.6 776.2 H1115.7 M774.6 749 H1115.7 M774.6 721.8 H1115.7 M774.6 694.6 H1115.7" stroke="#d9d9d9" stroke-width="1.5" fill="none"/>
<path d="M774.6 694.6 V830.6 H1115.7 M768.6 830.6 H780.6 M768.6 803.4 H780.6 M768.6 776.2 H780.6 M768.6 749 H780.6 M768.6 721.8 H780.6 M768.6 694.6 H780.6 M774.6 824.5 V836.5 M780.1 827.5 V835 M785.6 824.5 V836.5 M791.1 827.5 V835 M796.6 824.5 V836.5 M802.1 827.5 V835 M807.6 824.5 V836.5 M813.1 827.5 V835 M818.6 824.5 V836.5 M824.1 827.5 V835 M829.6 824.5 V836.5 M835.1 827.5 V835 M840.6 824.5 V836.5 M846.1 827.5 V835 M851.6 824.5 V836.5 M857.1 827.5 V835 M862.6 824.5 V836.5 M868.1 827.5 V835 M873.6 824.5 V836.5 M879.1 827.5 V835 M884.6 824.5 V836.5 M890.1 827.5 V835 M895.6 824.5 V836.5 M901.1 827.5 V835 M906.6 824.5 V836.5 M912.1 827.5 V835 M917.6 824.5 V836.5 M923.1 827.5 V835 M928.6 824.5 V836.5 M934.1 827.5 V835 M939.6 824.5 V836.5 M945.2 827.5 V835 M950.7 824.5 V836.5 M956.2 827.5 V835 M961.7 824.5 V836.5 M967.2 827.5 V835 M972.7 824.5 V836.5 M978.2 827.5 V835 M983.7 824.5 V836.5 M989.2 827.5 V835 M994.7 824.5 V836.5 M1000.2 827.5 V835 M1005.7 824.5 V836.5 M1011.2 827.5 V835 M1016.7 824.5 V836.5 M1022.2 827.5 V835 M1027.7 824.5 V836.5 M1033.2 827.5 V835 M1038.7 824.5 V836.5 M1044.2 827.5 V835 M1049.7 824.5 V836.5 M1055.2 827.5 V835 M1060.7 824.5 V836.5 M1066.2 827.5 V835 M1071.7 824.5 V836.5 M1077.2 827.5 V835 M1082.7 824.5 V836.5 M1088.2 827.5 V835 M1093.7 824.5 V836.5 M1099.2 827.5 V835 M1104.7 824.5 V836.5 M1110.2 827.5 V835 M1115.7 824.5 V836.5" stroke="#808080" stroke-width="1.5" fill="none"/>
<path d="M774.6 725.3 L775.3 724.5 L775.3 718.7 L782.3 718.7 L782.3 727 L785.1 725.3 L787.2 718.7 L793.8 718.7 L793.8 726.1 L797.1 725.3 L799.2 718.7 L804.2 718.7 L804.2 724.5 L809.4 726.5 L814.3 727.4 L819.3 729.4 L819.3 718.7 L826.7 718.7 L826.7 725.3 L829.9 724.5 L829.9 718.7 L837.7 718.7 L837.7 723.7 L840.9 723.7 L840.9 718.7 L848.8 718.7 L848.8 726.5 L852.1 724.5 L852.1 718.7 L860 718.7 L860 728.6 L862.8 726.1 L864.9 718.7 L871 718.7 L871 728.6 L873.8 727 L875.9 718.7 L881.3 718.7 L881.3 725.3 L888.2 728.1 L896.5 731.1 L896.5 718.7 L904.3 718.7 L904.3 727.4 L907.1 726.5 L909.3 718.7 L915.3 718.7 L915.3 729.4 L917.8 727 L920.3 718.7 L925.7 718.7 L925.7 729.4 L928.5 727.4 L930.9 718.7 L936.7 718.7 L936.7 729.4 L939.5 727.8 L942.1 718.7 L948.2 718.7 L948.2 730.2 L950.7 728.1 L953.5 718.7 L958.4 718.7 L958.4 727 L964.6 730.2 L969.6 731.4 L974.5 733.5 L974.5 718.7 L981.4 718.7 L981.4 731.9 L984.3 728.6 L986.8 718.7 L992.2 718.7 L992.2 727.8 L995 727 L997.8 718.7 L1003.2 718.7 L1003.2 727 L1006 726.1 L1008.6 718.7 L1014.2 718.7 L1014.2 728.6 L1017.2 726.1 L1019.7 718.7 L1025.1 718.7 L1025.1 728.6 L1027.9 727 L1035.3 729.1 L1043.5 731.4 L1051.7 731.9 L1051.7 718.7 L1058.2 718.7 L1058.2 728.6 L1061.5 727 L1063.5 718.7 L1069.4 718.7 L1069.4 729.4 L1072.2 727 L1074.7 718.7 L1080.4 718.7 L1080.4 730.2 L1083.2 728.1 L1085.8 718.7 L1091.4 718.7 L1091.4 728.6 L1094.4 727.8 L1096.8 718.7 L1102.6 718.7 L1102.6 727.8 L1105.1 725.3 L1115.7 725.3 L1115.7 733.5" stroke="#ff0000" stroke-width="1.5" fill="none" stroke-linejoin="round"/>
<path d="M774.6 772.1 C775 772.4 776.4 773.7 777.4 774.1 C778.4 774.5 780.9 773.1 781.5 774.6 C782.9 777.9 785.4 793.7 786.4 795.9 C787.5 798.1 787.9 792.1 788.4 789.4 C789.3 784.7 791.1 767.5 792.2 764.7 C793.2 762.1 794.6 770 795.5 770.8 C796.2 771.5 797.2 769.4 797.9 770.1 C798.7 770.9 799.8 776.3 800.4 775.7 C801 775.2 801.4 766.3 802 766.4 C802.7 766.4 804.2 773.7 804.8 776.2 C805.5 778.8 805.9 783.4 806.5 783.3 C807 783.2 808 775.1 808.6 775.7 C809.2 776.3 810 788.3 810.7 787.2 C811.5 786.1 812.6 768.7 813.5 768.5 C814.4 768.3 816 784.3 816.8 786.1 C817.6 787.8 818.3 781.3 818.9 780.3 C819.4 779.6 820.7 780.3 820.9 779.5 C821.7 776.1 823.7 759.9 824.5 757.3 C825.2 755.3 825.4 761.5 826.7 762.3 C828 763 831.8 764.4 833.2 762.3 C834.6 760.1 835.2 748.2 836 747.8 C836.9 747.4 838.2 756.9 839 759.8 C839.8 762.7 840.6 765.5 841.4 767.2 C842.3 768.8 843.9 770.2 844.7 770.8 C845.5 771.4 846.7 770.4 847.2 771.3 C848.1 773 849.7 780.3 850.5 782 C850.8 782.7 852.1 781.6 852.4 782.3 C853.1 783.8 853.9 792.1 854.6 791.8 C855.3 791.5 856.3 781.4 857 780.3 C857.8 779.2 858.9 782.6 859.5 784.4 C860.1 786.5 860.2 791.7 861.1 793.8 C862.1 795.9 864.4 800.7 865.6 798.4 C866.8 796.1 868.1 779 869 778.4 C870 777.7 871.2 792.6 871.8 794.3 C872.5 795.9 872.8 788.9 873.5 789.4 C874.1 789.8 875 799.1 875.9 797.1 C876.9 795 878.6 776 879.7 775.7 C880.8 775.4 882.6 791.8 883.3 795.1 C883.6 796.4 883.9 797.7 884.6 798.1 C885.3 798.4 887.6 798.9 887.9 797.6 C888.9 793.4 890.3 773.7 891.2 770.5 C891.8 768.2 893.2 775 894 775.7 C894.8 776.5 896 775 896.8 775.4 C897.5 775.8 898.2 779.5 898.9 778.7 C899.7 777.9 901.1 770.3 901.9 770.1 C902.7 770 903.4 776.5 904.3 777.9 C905.2 779.2 906.6 780 908 779.5 C909.3 779 912.1 771.9 913.2 774.6 C914.4 777.4 915.2 794 916.2 798.4 C916.8 801 918.5 805.1 919.8 804.1 C921 803.2 923.3 793.1 924.4 792.2 C925.4 791.2 926.2 796.8 926.8 797.6 C927.4 798.2 928.7 796.8 929 797.6 C929.7 799.5 930.9 810.7 931.8 810.2 C932.7 809.7 934.2 796.1 935.1 794.3 C935.9 792.6 936.9 798.6 937.5 798.4 C938.1 798.1 938.3 792.8 938.8 792.6 C939.3 792.5 939.8 797.9 940.8 797.6 C941.8 797.3 944 789.6 945.4 790.5 C946.8 791.4 948.9 801.2 949.8 803.3 C950.3 804.3 951.4 804 951.8 805 C952.4 806.5 953.1 815.5 954 813.5 C954.8 811.5 956.3 793 957.2 791.5 C958.2 790 959.4 799.1 960.5 803.3 C961.6 807.6 963.5 820.6 964.6 819.7 C965.8 818.9 967.4 799.8 968.2 797.6 C969.1 795.4 969.8 801.9 970.4 805 C971.1 808.3 972 816.7 972.8 819.7 C973.5 822.1 975.3 827.3 976.1 825 C977.1 822.3 978.6 804.1 979.4 801.7 C980.2 799.3 980.8 810.5 981.4 809.1 C982 807.6 982.8 795.1 983.5 791.8 C984 789.7 985.2 788.9 986 786.9 C986.7 784.9 987.5 780.5 988.4 778.7 C989.4 776.8 991.4 775 992.6 774.6 C993.7 774.1 994.7 775.6 995.8 775.7 C996.9 775.9 999 776 999.9 775.7 C1000.9 775.5 1001.5 774 1002.4 774.1 C1003.3 774.2 1005.3 774.7 1005.7 776.2 C1006.7 779.7 1007.9 796.5 1009 797.6 C1010 798.7 1011.5 783.9 1012.6 783.6 C1013.7 783.4 1015.2 794.4 1016.4 795.9 C1017.5 797.4 1019.7 795.5 1020.5 793.8 C1021.5 791.6 1022.4 780.2 1023.4 781.1 C1024.4 782.1 1026.1 797.6 1027 800 C1027.5 801.3 1028.9 797.3 1029.5 797.6 C1030.1 797.8 1030.8 803.4 1031.1 801.7 C1031.9 798.2 1033.4 776.1 1034.4 774.1 C1035.4 772.1 1036.8 787.4 1037.7 788.5 C1038.6 789.7 1039.9 782.1 1040.5 782 C1041.1 781.8 1041 789.1 1041.8 787.7 C1042.6 786.4 1044.9 775 1045.9 772.9 C1046.4 772 1047.9 772.9 1048.4 773.8 C1049.3 775.2 1050.5 782.2 1051.7 782.8 C1052.9 783.4 1055.2 776.9 1056.3 777.9 C1057.4 778.8 1058.3 787 1059.1 789.4 C1059.6 791.1 1060.5 793.6 1061.2 793.5 C1061.9 793.3 1063.1 790.1 1064 788.5 C1064.9 787 1066.2 781.8 1067.3 783.3 C1068.4 784.8 1070.4 792.6 1071.4 798.4 C1072.4 804.2 1073.2 818.6 1073.8 822.2 C1074 822.9 1075.4 822.9 1075.5 822.2 C1076.2 818.5 1077.5 799.7 1078.3 797.6 C1079.1 795.5 1080.1 804.2 1080.9 808.2 C1081.7 812.3 1082.8 823.7 1083.7 824.7 C1084.6 825.7 1086.3 818.9 1087 814.8 C1087.9 809.1 1088.8 792.1 1089.8 786.9 C1090.3 783.9 1092.7 782.9 1093.6 780.3 C1094.4 777.7 1095 770.9 1095.7 769.7 C1096.4 768.4 1097.8 771.9 1098.5 772.1 C1099.1 772.4 1099.6 770.8 1100.1 771.3 C1100.9 772 1102.8 774.5 1103.4 777 C1104.1 780 1103.2 788.9 1105.1 791 C1106.9 793.1 1114.1 792.5 1115.7 791 C1117.3 789.5 1115.7 782.6 1115.7 781.1" stroke="#0000ff" stroke-width="1.7" fill="none" stroke-linejoin="round"/>
<g font-family="Liberation Sans" font-size="9" fill="#000"><text x="761.5" y="697.8" text-anchor="end">30</text><text x="761.5" y="725" text-anchor="end">20</text><text x="761.5" y="752.2" text-anchor="end">10</text><text x="761.5" y="779.4" text-anchor="end">0</text><text x="761.5" y="806.6" text-anchor="end">-10</text><text x="761.5" y="833.8" text-anchor="end">-20</text><text transform="translate(733,762.5) rotate(-90)" text-anchor="middle" font-size="9.5">°C</text><text transform="translate(773.1,847.5) rotate(47)" font-size="8" textLength="44" lengthAdjust="spacingAndGlyphs">01/12/2021</text><text transform="translate(784.1,847.5) rotate(47)" font-size="8" textLength="44" lengthAdjust="spacingAndGlyphs">02/12/2021</text><text transform="translate(795.1,847.5) rotate(47)" font-size="8" textLength="44" lengthAdjust="spacingAndGlyphs">03/12/2021</text><text transform="translate(806.1,847.5) rotate(47)" font-size="8" textLength="44" lengthAdjust="spacingAndGlyphs">04/12/2021</text><text transform="translate(817.1,847.5) rotate(47)" font-size="8" textLength="44" lengthAdjust="spacingAndGlyphs">05/12/2021</text><text transform="translate(828.1,847.5) rotate(47)" font-size="8" textLength="44" lengthAdjust="spacingAndGlyphs">06/12/2021</text><text transform="translate(839.1,847.5) rotate(47)" font-size="8" textLength="44" lengthAdjust="spacingAndGlyphs">07/12/2021</text><text transform="translate(850.1,847.5) rotate(47)" font-size="8" textLength="44" lengthAdjust="spacingAndGlyphs">08/12/2021</text><text transform="translate(861.1,847.5) rotate(47)" font-size="8" textLength="44" lengthAdjust="spacingAndGlyphs">09/12/2021</text><text transform="translate(872.1,847.5) rotate(47)" font-size="8" textLength="44" lengthAdjust="spacingAndGlyphs">10/12/2021</text><text transform="translate(883.1,847.5) rotate(47)" font-size="8" textLength="44" lengthAdjust="spacingAndGlyphs">11/12/2021</text><text transform="translate(894.1,847.5) rotate(47)" font-size="8" textLength="44" lengthAdjust="spacingAndGlyphs">12/12/2021</text><text transform="translate(905.1,847.5) rotate(47)" font-size="8" textLength="44" lengthAdjust="spacingAndGlyphs">13/12/2021</text><text transform="translate(916.1,847.5) rotate(47)" font-size="8" textLength="44" lengthAdjust="spacingAndGlyphs">14/12/2021</text><text transform="translate(927.1,847.5) rotate(47)" font-size="8" textLength="44" lengthAdjust="spacingAndGlyphs">15/12/2021</text><text transform="translate(938.1,847.5) rotate(47)" font-size="8" textLength="44" lengthAdjust="spacingAndGlyphs">16/12/2021</text><text transform="translate(949.2,847.5) rotate(47)" font-size="8" textLength="44" lengthAdjust="spacingAndGlyphs">17/12/2021</text><text transform="translate(960.2,847.5) rotate(47)" font-size="8" textLength="44" lengthAdjust="spacingAndGlyphs">18/12/2021</text><text transform="translate(971.2,847.5) rotate(47)" font-size="8" textLength="44" lengthAdjust="spacingAndGlyphs">19/12/2021</text><text transform="translate(982.2,847.5) rotate(47)" font-size="8" textLength="44" lengthAdjust="spacingAndGlyphs">20/12/2021</text><text transform="translate(993.2,847.5) rotate(47)" font-size="8" textLength="44" lengthAdjust="spacingAndGlyphs">21/12/2021</text><text transform="translate(1004.2,847.5) rotate(47)" font-size="8" textLength="44" lengthAdjust="spacingAndGlyphs">22/12/2021</text><text transform="translate(1015.2,847.5) rotate(47)" font-size="8" textLength="44" lengthAdjust="spacingAndGlyphs">23/12/2021</text><text transform="translate(1026.2,847.5) rotate(47)" font-size="8" textLength="44" lengthAdjust="spacingAndGlyphs">24/12/2021</text><text transform="translate(1037.2,847.5) rotate(47)" font-size="8" textLength="44" lengthAdjust="spacingAndGlyphs">25/12/2021</text><text transform="translate(1048.2,847.5) rotate(47)" font-size="8" textLength="44" lengthAdjust="spacingAndGlyphs">26/12/2021</text><text transform="translate(1059.2,847.5) rotate(47)" font-size="8" textLength="44" lengthAdjust="spacingAndGlyphs">27/12/2021</text><text transform="translate(1070.2,847.5) rotate(47)" font-size="8" textLength="44" lengthAdjust="spacingAndGlyphs">28/12/2021</text><text transform="translate(1081.2,847.5) rotate(47)" font-size="8" textLength="44" lengthAdjust="spacingAndGlyphs">29/12/2021</text><text transform="translate(1092.2,847.5) rotate(47)" font-size="8" textLength="44" lengthAdjust="spacingAndGlyphs">30/12/2021</text><text transform="translate(1103.2,847.5) rotate(47)" font-size="8" textLength="44" lengthAdjust="spacingAndGlyphs">31/12/2021</text><text transform="translate(1114.2,847.5) rotate(47)" font-size="8" textLength="44" lengthAdjust="spacingAndGlyphs">01/01/2022</text></g>
<circle cx="1336" cy="801.4" r="70" fill="none" stroke="#ffcc00" stroke-width="61"/>
<circle cx="1336" cy="801.4" r="100.6" fill="none" stroke="#d6d6d6" stroke-width="1"/>
<rect x="1512.6" y="795" width="12.5" height="12" fill="#ffcc00"/>
<text x="1537.5" y="806" font-family="Liberation Sans" font-size="12" fill="#000">Eclairage</text></svg>
</div>
<div class="abs" style="left:992px;top:47px;width:21.5px;height:715px;background:#f0f0f0"></div>
<svg class="abs" style="left:997.5px;top:55.5px" width="10" height="6"><path d="M0 5.3 L4.6 0 L9.2 5.3 Z" fill="#a3a3a3"/></svg>
<div class="abs" style="left:994px;top:68px;width:17px;height:330px;background:#c1c1c1"></div>
<svg class="abs" style="left:997.5px;top:747.5px" width="10" height="6"><path d="M0 0 L4.6 5.3 L9.2 0 Z" fill="#505050"/></svg>
<div class="abs" style="left:1px;top:762px;width:992px;height:21px;background:#f0f0f0"></div>
<svg class="abs" style="left:8.5px;top:767.5px" width="6" height="10"><path d="M5.3 0 L0 4.6 L5.3 9.2 Z" fill="#a3a3a3"/></svg>
<div class="abs" style="left:22px;top:764.5px;width:921px;height:16.5px;background:#c1c1c1"></div>
<svg class="abs" style="left:980px;top:767.5px" width="6" height="10"><path d="M0 0 L5.3 4.6 L0 9.2 Z" fill="#505050"/></svg>
<div class="abs" style="left:992px;top:762px;width:21.5px;height:21px;background:#dcdcdc"></div>
<div class="abs" style="left:1014.3px;top:47px;width:9px;height:736px;background:#e8e8e8;border-left:1px solid #d6d6d6;border-right:1px solid #cfcfcf"></div>
<div class="abs" style="left:1016.8px;top:403px;width:3.5px;height:20px;background:#111;border-radius:1px"></div>
<svg class="abs" style="left:1015.3px;top:437px" width="6" height="10"><path d="M0 0 L5 4.5 L0 9 Z" fill="#111"/></svg>
<div class="abs" style="left:1031px;top:55px;width:246px;height:22px;background:#ebeaeb"></div>
<div class="abs" style="left:1031.5px;top:55px;font-size:19px;font-weight:bold;line-height:24px;color:#222">Date</div>
<div class="abs" style="left:1031px;top:77px;width:246px;height:42.5px;border:1px solid #c8c8c8;border-radius:5px;background:#fff;overflow:hidden">
<div class="abs" style="left:203px;top:0;width:42px;height:41px;background:#f0f0f0;border-left:1px solid #c8c8c8"></div>
</div>
<div class="abs" style="left:1045px;top:87.5px;font-size:19.3px;line-height:24px;color:#111">1/6/2022</div>
<svg class="abs" style="left:1247px;top:89px" width="20" height="20" viewBox="0 0 20 20"><rect x="1.3" y="2.8" width="16" height="16" rx="1" fill="none" stroke="#222" stroke-width="1.4"/><path d="M1.5 6.5 H17.5" stroke="#222" stroke-width="1.6"/><path d="M5 0.8 V4.5 M13.5 0.8 V4.5" stroke="#222" stroke-width="1.5"/><rect x="11" y="12" width="4" height="4" fill="#222"/></svg>
<div id="tb">
<div class="abs" style="left:631.2px;top:0;width:64px;height:45px;background:linear-gradient(#f47a2f,#f05a08)"></div>
<div class="abs" style="left:913px;top:0;width:64px;height:45px;background:linear-gradient(#f47a2f,#f05a08)"></div>
<div class="abs" style="left:407.5px;top:12.3px;width:46px;height:20px;background:#fff;border:1px solid #bdbdbd;border-radius:4px"></div>
<div class="abs" style="left:414px;top:11.5px;width:22px;text-align:center;font-size:17.5px;line-height:22px;color:#111">1</div>
<div class="abs" style="left:459.5px;top:11.5px;font-size:17.5px;line-height:22px;color:#111">/ 1</div>
<svg class="abs" style="left:-633px;top:-131px;overflow:visible" width="1" height="1">
<path d="M658 155 L665.5 148 V152 C671 152 675 155.5 675.5 162 C673.5 158.5 670.5 157.5 665.5 157.5 V162 Z" fill="#222"/>
<path d="M739 155 L731.5 148 V152 C726 152 722 155.5 721.5 162 C723.5 158.5 726.5 157.5 731.5 157.5 V162 Z" fill="#d2d2d2"/>
<path d="M789 150.5 L799.5 160.5 M799.5 150.5 L789 160.5" stroke="#d0d0d0" stroke-width="2.2"/>
<path d="M864 151 A7.6 7.6 0 1 1 857.5 147.5" fill="none" stroke="#222" stroke-width="2"/><path d="M856 144.5 L862 148 L856 151.5 Z" fill="#222"/>
<path d="M922.5 150 L915 155.2 L922.5 160.3 Z M930 150 L922.5 155.2 L930 160.3 Z" fill="#d3d3d3"/>
<path d="M990.8 150 L982.5 155.2 L990.8 160.3 Z" fill="#d3d3d3"/>
<path d="M1163.7 150 L1172 155.2 L1163.7 160.3 Z" fill="#d3d3d3"/>
<path d="M1224 150 L1231.8 155.2 L1224 160.3 Z M1231.8 150 L1239.7 155.2 L1231.8 160.3 Z" fill="#d3d3d3"/>
<path d="M1289.5 147 H1299 L1303.5 151.5 V163 H1289.5 Z M1298.5 147.3 V152 H1303.3" fill="none" stroke="#fff" stroke-width="1.6"/>
<path d="M1360.5 146.7 V157 M1356 152.5 L1360.5 157.5 L1365 152.5" fill="none" stroke="#222" stroke-width="2.2"/><rect x="1351.7" y="160.3" width="17.5" height="3.5" fill="#222"/>
<path d="M1381 151.3 H1391 L1386 158.8 Z" fill="#222"/>
<path d="M1444.5 152 V147.5 H1453 L1455 149.5 V152" fill="none" stroke="#222" stroke-width="1.6"/>
<path d="M1441 153.5 C1441 152.5 1442 152 1443 152 H1456 C1457 152 1458 152.5 1458 153.5 V160 H1455.5 V157.5 H1443.5 V160 H1441 Z" fill="#222"/>
<path d="M1444 158 H1455 V163.5 H1444 Z" fill="none" stroke="#222" stroke-width="1.3"/><path d="M1446 161 H1453" stroke="#222" stroke-width="1"/>
<path d="M1508.5 147.5 H1519.5 V162 M1506 149.5 H1517 V164 H1506 Z M1508.5 152.5 H1514.5 M1508.5 155 H1514.5 M1508.5 157.5 H1514.5" fill="none" stroke="#cfcfcf" stroke-width="1.3"/>
<path d="M1569.6 147.5 H1586 L1580 155 V164 L1576 161 V155 Z" fill="#fff"/>
<circle cx="1639" cy="153" r="5.6" fill="none" stroke="#222" stroke-width="1.8"/><path d="M1636 153 H1642 M1639 150 V156" stroke="#222" stroke-width="2"/><path d="M1643.2 157.2 L1650 163.7" stroke="#222" stroke-width="2.6"/>
<circle cx="1703" cy="153" r="5.6" fill="none" stroke="#222" stroke-width="1.8"/><path d="M1700 153 H1706" stroke="#222" stroke-width="2"/><path d="M1707.2 157.2 L1714 163.7" stroke="#222" stroke-width="2.6"/>
<rect x="1761.5" y="147.2" width="17" height="12" rx="1" fill="none" stroke="#222" stroke-width="1.4"/><path d="M1763.5 158 C1766 152 1771 149 1777 148.8 V158 Z" fill="#222"/><path d="M1767 163.9 L1770 160.5 L1773 163.9 Z" fill="#222"/>
<circle cx="1831.5" cy="153" r="5.8" fill="none" stroke="#222" stroke-width="1.7"/><path d="M1835.8 157.3 L1842.3 163.7" stroke="#222" stroke-width="2.4"/>
</svg>
</div></div>
<div class="abs" style="left:310px;top:68px;width:1px;height:845px;background:#e0e0e0"></div>
<div class="abs" style="left:0;top:68px;width:1918px;height:1px;background:#b3aea8"></div>
</body></html>
